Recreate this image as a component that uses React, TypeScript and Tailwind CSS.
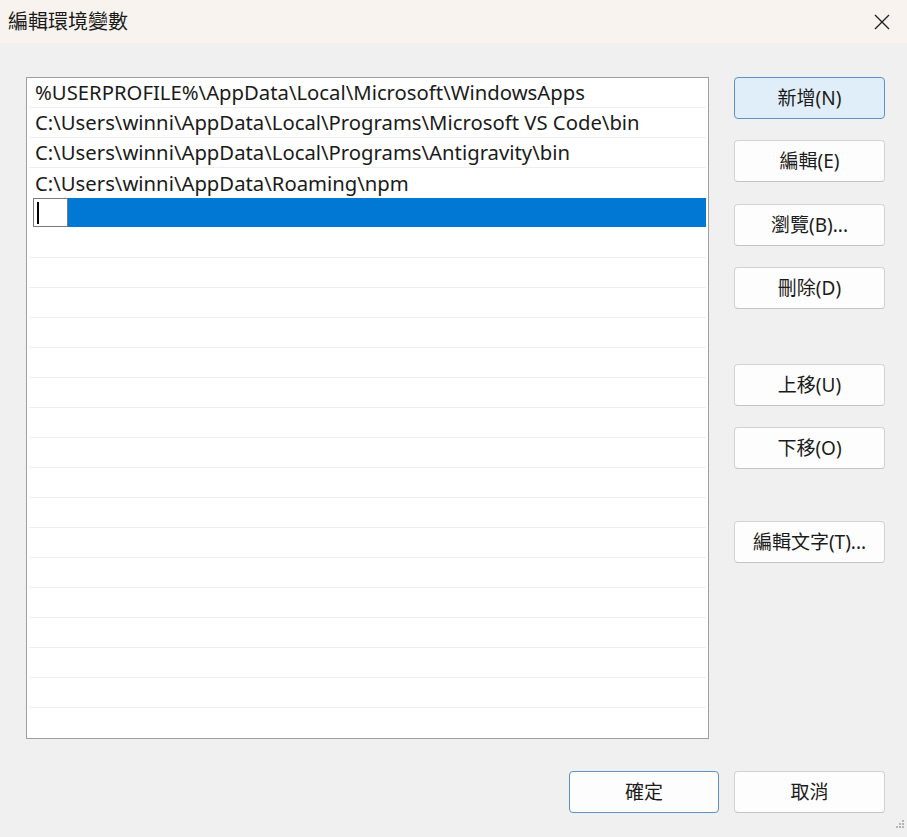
import React from "react";

const paths = [
  "%USERPROFILE%\\AppData\\Local\\Microsoft\\WindowsApps",
  "C:\\Users\\winni\\AppData\\Local\\Programs\\Microsoft VS Code\\bin",
  "C:\\Users\\winni\\AppData\\Local\\Programs\\Antigravity\\bin",
  "C:\\Users\\winni\\AppData\\Roaming\\npm",
];

const FONT = {
  fontFamily: '"Noto Sans", "Noto Sans CJK TC", sans-serif',
};

const Btn = ({
  label,
  className = "",
  primary = false,
}: {
  label: string;
  className?: string;
  primary?: boolean;
}) => (
  <button
    className={`w-[151px] h-[42px] rounded-[4px] border text-[19px] text-[#1b1b1b] flex items-center justify-center ${
      primary
        ? "bg-[#e0eef9] border-[#5b93c7]"
        : "bg-[#fdfdfd] border-[#d3d3d3] border-b-[#c4c4c4]"
    } ${className}`}
  >
    {label}
  </button>
);

export default function App() {
  const rows = Array.from({ length: 22 }, (_, i) => i);

  return (
    <div
      className="w-[907px] h-[837px] bg-[#f0f0f0] flex flex-col overflow-hidden"
      style={FONT}
    >
      {/* title bar */}
      <div className="h-[43px] bg-[#f8f3ee] flex items-center justify-between pl-[8px] pr-[16px]">
        <span className="text-[20px] text-[#1b1b1b]">編輯環境變數</span>
        <svg width="18" height="18" viewBox="0 0 18 18">
          <path
            d="M2 2 L16 16 M16 2 L2 16"
            stroke="#222"
            strokeWidth="1.4"
            fill="none"
          />
        </svg>
      </div>

      {/* body */}
      <div className="flex pl-[26px] pt-[34px]">
        {/* list */}
        <div className="w-[683px] h-[662px] bg-white border border-[#a0a0a0] flex flex-col">
          {rows.map((i) => {
            const text = paths[i];
            const selected = i === 4;
            return (
              <div key={i} className="h-[30px] shrink-0 px-[2px]">
                {selected ? (
                  <div className="h-[29px] ml-[4px] bg-[#0078d4] flex items-center">
                    <div className="w-[35px] h-[29px] bg-white border border-[#7a7a7a] flex items-center pl-[3px]">
                      <div className="w-[1.5px] h-[22px] bg-black" />
                    </div>
                  </div>
                ) : (
                  <div
                    className={`h-[30px] flex items-center pl-[6px] text-[20.3px] text-[#1b1b1b] whitespace-nowrap ${
                      i < 21 && i !== 3 ? "border-b border-[#efefef]" : ""
                    }`}
                  >
                    {text}
                  </div>
                )}
              </div>
            );
          })}
        </div>

        {/* side buttons */}
        <div className="flex flex-col ml-[25px]">
          <Btn label="新增(N)" primary />
          <Btn label="編輯(E)" className="mt-[21px]" />
          <Btn label="瀏覽(B)..." className="mt-[22px]" />
          <Btn label="刪除(D)" className="mt-[21px]" />
          <Btn label="上移(U)" className="mt-[55px]" />
          <Btn label="下移(O)" className="mt-[21px]" />
          <Btn label="編輯文字(T)..." className="mt-[52px]" />
        </div>
      </div>

      {/* bottom buttons */}
      <div className="flex justify-end gap-[15px] pr-[22px] mt-[32px]">
        <button className="w-[150px] h-[42px] rounded-[4px] border border-[#5b93c7] bg-[#fdfdfd] text-[19px] text-[#1b1b1b]">
          確定
        </button>
        <Btn label="取消" />
      </div>

      {/* resize grip */}
      <div className="flex justify-end pr-[2px] mt-[6px]">
        <svg width="12" height="12" viewBox="0 0 12 12">
          {[
            [9, 1],
            [6, 4],
            [9, 4],
            [3, 7],
            [6, 7],
            [9, 7],
          ].map(([x, y], k) => (
            <rect key={k} x={x} y={y} width="2" height="2" fill="#b5b5b5" />
          ))}
        </svg>
      </div>
    </div>
  );
}
